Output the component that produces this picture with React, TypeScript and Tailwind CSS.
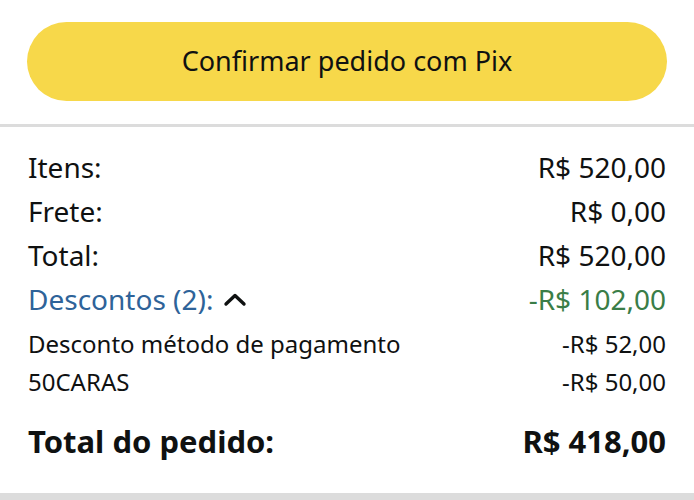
export default function App() {
  return (
    <div className="w-[694px] h-[500px] bg-white overflow-hidden text-[#0f1111]" style={{ fontFamily: '"Noto Sans", Roboto, sans-serif' }}>
      <div className="px-[27px] pt-[22px] pb-[23px]">
        <button className="w-full h-[79px] rounded-full bg-[#f7d84a] text-[27px] text-[#0f1111]">
          Confirmar pedido com Pix
        </button>
      </div>
      <div className="h-[3px] bg-[#dcdcdc]" />
      <div className="px-[28px] pt-[18px]">
        <div className="flex flex-col text-[28px] leading-[44px]">
          <div className="flex justify-between"><span>Itens:</span><span>R$ 520,00</span></div>
          <div className="flex justify-between"><span>Frete:</span><span>R$ 0,00</span></div>
          <div className="flex justify-between"><span>Total:</span><span>R$ 520,00</span></div>
          <div className="flex justify-between">
            <span className="flex items-center gap-[10px] text-[#2e6399]">
              Descontos (2):
              <svg width="24" height="15" viewBox="0 0 24 15" fill="none" stroke="#0f1111" strokeWidth="3.4" strokeLinecap="round" strokeLinejoin="round">
                <path d="M3 12 L12 3.5 L21 12" />
              </svg>
            </span>
            <span className="text-[#3a7d47]">-R$ 102,00</span>
          </div>
        </div>
        <div className="flex flex-col text-[24px] leading-[38px] mt-[4px]">
          <div className="flex justify-between"><span>Desconto método de pagamento</span><span>-R$ 52,00</span></div>
          <div className="flex justify-between"><span>50CARAS</span><span>-R$ 50,00</span></div>
        </div>
        <div className="flex justify-between text-[31px] font-bold leading-[56px] mt-[12px]">
          <span>Total do pedido:</span><span>R$ 418,00</span>
        </div>
      </div>
      <div className="h-[8px] bg-[#dcdcdc] mt-[24px]" />
    </div>
  );
}
